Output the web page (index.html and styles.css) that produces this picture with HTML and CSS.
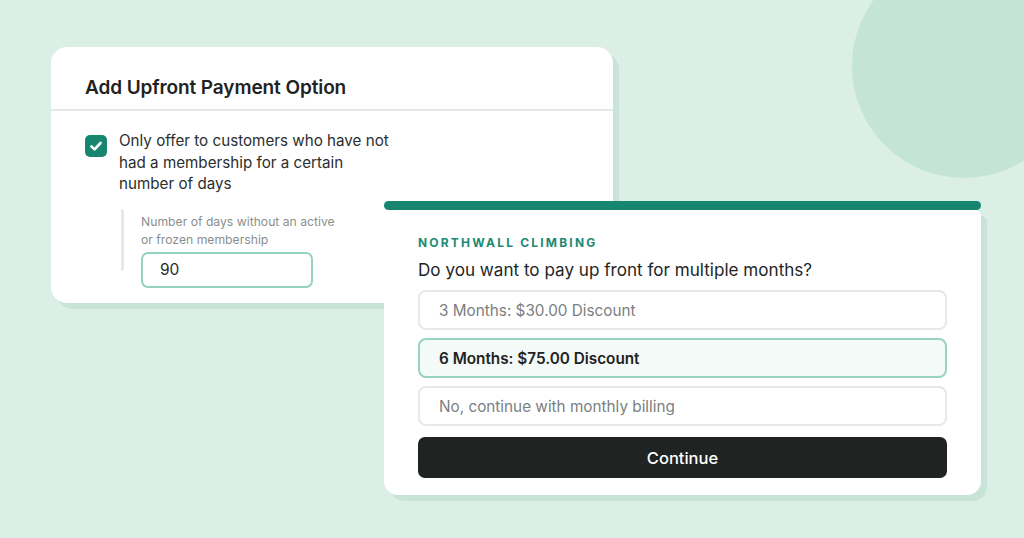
FILE: index.html
```html
<!DOCTYPE html>
<html>
<head>
<meta charset="utf-8">
<link rel="stylesheet" href="styles.css">
</head>
<body>
<div class="stage">
  <div class="circle"></div>

  <section class="card card-settings">
    <header class="card-head">
      <h2 class="card-title">Add Upfront Payment Option</h2>
    </header>
    <div class="card-content">
      <div class="check-row">
        <span class="checkbox">
          <svg viewBox="0 0 22 22" width="22" height="22"><path d="M6.5 11.5 L9.6 14.4 L15.5 8" fill="none" stroke="#fff" stroke-width="2.6" stroke-linecap="round" stroke-linejoin="round"/></svg>
        </span>
        <p class="check-label">Only offer to customers who have not had a membership for a certain number of days</p>
      </div>
      <div class="sub">
        <p class="sub-label">Number of days without an active or frozen membership</p>
        <div class="num-input">90</div>
      </div>
    </div>
  </section>

  <section class="card card-offer">
    <div class="offer-bar"></div>
    <div class="offer-body">
      <p class="brand">NORTHWALL CLIMBING</p>
      <p class="question">Do you want to pay up front for multiple months?</p>
      <div class="options">
        <div class="option">3 Months: $30.00 Discount</div>
        <div class="option selected">6 Months: $75.00 Discount</div>
        <div class="option">No, continue with monthly billing</div>
      </div>
      <button class="continue">Continue</button>
    </div>
  </section>
</div>
</body>
</html>
```

FILE: styles.css
```css
* { box-sizing: border-box; }
html, body { margin: 0; padding: 0; }
body {
  width: 1024px;
  height: 538px;
  overflow: hidden;
  background: #dcefe6;
  font-family: "Inter", "Noto Sans", sans-serif;
  color: #262a2a;
}
.stage {
  position: relative;
  width: 1024px;
  height: 538px;
  overflow: hidden;
}
.circle {
  position: absolute;
  left: 852px;
  top: -46px;
  width: 224px;
  height: 224px;
  border-radius: 50%;
  background: #c3e4d6;
}
.card {
  position: absolute;
  background: #fff;
}
.card-settings {
  left: 51px;
  top: 47px;
  width: 562px;
  height: 256px;
  border-radius: 16px;
  box-shadow: 6px 6px 0 #c8e3d8;
}
.card-head {
  height: 64px;
  padding: 18px 34px 0 34px;
  display: flex;
  align-items: center;
  border-bottom: 2px solid #e3e8e6;
}
.card-title {
  margin: 0;
  font-size: 19px;
  font-weight: 600;
  color: #1f2322;
  letter-spacing: -0.1px;
}
.card-content {
  padding: 19px 34px 0 34px;
}
.check-row {
  display: flex;
  align-items: flex-start;
  gap: 12px;
}
.checkbox {
  flex: none;
  width: 22px;
  height: 22px;
  margin-top: 5px;
  border-radius: 5px;
  background: #168670;
  display: flex;
}
.check-label {
  margin: 0;
  width: 276px;
  font-size: 15.2px;
  line-height: 21.5px;
  color: #2b2f2f;
}
.sub {
  position: relative;
  margin: 14px 0 0 36px;
  padding: 4px 0 0 20px;
}
.sub::before {
  content: "";
  position: absolute;
  left: 0;
  top: 0;
  width: 3px;
  height: 62px;
  background: #e5e8e7;
  border-radius: 2px;
}
.sub-label {
  margin: 0 0 3px 0;
  width: 200px;
  font-size: 12.2px;
  line-height: 18px;
  color: #8a8f8e;
}
.num-input {
  width: 172px;
  height: 36px;
  border: 2px solid #93d2bd;
  border-radius: 7px;
  padding: 0 0 0 17px;
  display: flex;
  align-items: center;
  font-size: 15.5px;
  color: #262a2a;
}
.card-offer {
  left: 384px;
  top: 201px;
  width: 597px;
  height: 294px;
  background: transparent;
}
.offer-bar {
  height: 9px;
  background: #168670;
  border-radius: 5px;
}
.offer-body {
  height: 285px;
  background: #fff;
  border-radius: 0 6px 14px 14px;
  box-shadow: 6px 6px 0 #c8e3d8;
  padding: 24px 34px 0 34px;
}
.brand {
  margin: 0;
  font-size: 12px;
  line-height: 18px;
  font-weight: 700;
  letter-spacing: 2.2px;
  color: #1d8a74;
}
.question {
  margin: 5px 0 0 0;
  font-size: 17.1px;
  line-height: 26px;
  color: #222626;
}
.options {
  margin-top: 7px;
  display: flex;
  flex-direction: column;
  gap: 8px;
}
.option {
  height: 40px;
  border: 2px solid #e5e9e8;
  border-radius: 8px;
  padding: 0 0 0 19px;
  display: flex;
  align-items: center;
  font-size: 15.3px;
  color: #7b807f;
}
.option.selected {
  border-color: #97d3bf;
  background: #f3faf7;
  color: #1f2322;
  font-weight: 600;
}
.continue {
  margin-top: 11px;
  width: 100%;
  height: 41px;
  border: none;
  border-radius: 7px;
  background: #1f2422;
  color: #fff;
  font-family: inherit;
  font-size: 16.5px;
  font-weight: 500;
}
```
